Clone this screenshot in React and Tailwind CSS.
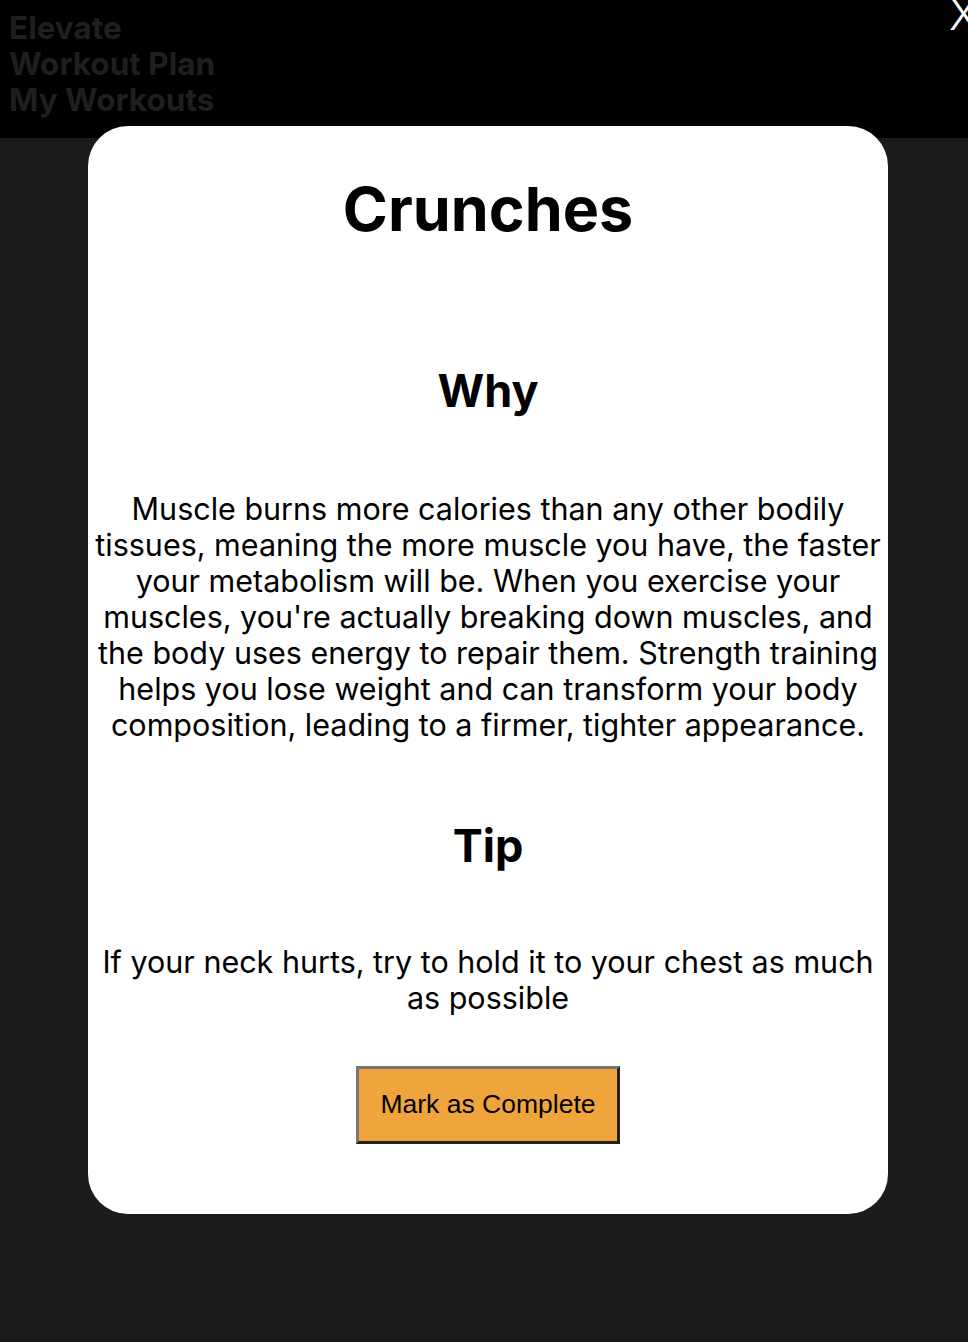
export default function App() {
  return (
    <div className="relative min-h-[1342px] bg-[#1b1b1b] font-['Inter','Noto_Sans',sans-serif] overflow-hidden">
      {/* Nav behind the modal */}
      <header className="h-[138px] bg-black px-[9px] pt-[10px]">
        <nav className="flex flex-col text-[31.5px] leading-[36px] font-bold text-[#1f1f1f]">
          <a>Elevate</a>
          <a>Workout Plan</a>
          <a>My Workouts</a>
        </nav>
      </header>

      <button className="absolute top-[-8px] right-[-10px] text-white text-[44px] leading-none font-light">X</button>

      {/* Modal */}
      <div className="absolute left-[88px] top-[126px] w-[800px] h-[1088px] bg-white rounded-[40px] px-[6px] text-center text-black">
        <h1 className="mt-[47px] text-[61px] leading-[72px] font-bold">Crunches</h1>
        <h2 className="mt-[119px] text-[45px] leading-[54px] font-bold">Why</h2>
        <p className="mt-[73px] text-[30.5px] leading-[36px]">
          Muscle burns more calories than any other bodily tissues, meaning the more muscle you have, the faster your metabolism will be. When you exercise your muscles, you're actually breaking down muscles, and the body uses energy to repair them. Strength training helps you lose weight and can transform your body composition, leading to a firmer, tighter appearance.
        </p>
        <h2 className="mt-[76px] text-[45px] leading-[54px] font-bold">Tip</h2>
        <p className="mt-[71px] text-[30.5px] leading-[36px]">
          If your neck hurts, try to hold it to your chest as much as possible
        </p>
        <button className="mt-[50px] w-[264px] h-[78px] bg-[#f0a43c] border-[3px] border-t-[#767676] border-l-[#767676] border-b-[#222] border-r-[#222] font-['Liberation_Sans',Arial,sans-serif] text-[26.5px] text-black">
          Mark as Complete
        </button>
      </div>
    </div>
  )
}
